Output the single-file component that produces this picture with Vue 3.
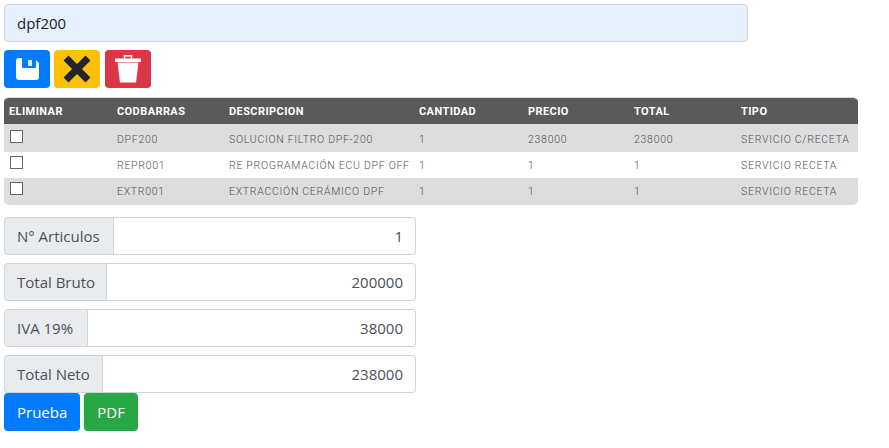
<script setup>
const rows = [
  ['DPF200', 'SOLUCION FILTRO DPF-200', '1', '238000', '238000', 'SERVICIO C/RECETA'],
  ['REPR001', 'RE PROGRAMACIÓN ECU DPF OFF', '1', '1', '1', 'SERVICIO RECETA'],
  ['EXTR001', 'EXTRACCIÓN CERÁMICO DPF', '1', '1', '1', 'SERVICIO RECETA'],
]
const heads = ['ELIMINAR', 'CODBARRAS', 'DESCRIPCION', 'CANTIDAD', 'PRECIO', 'TOTAL', 'TIPO']
const totals = [
  ['N° Articulos', '1'],
  ['Total Bruto', '200000'],
  ['IVA 19%', '38000'],
  ['Total Neto', '238000'],
]
</script>

<template>
  <main class="page">
    <input class="search" value="dpf200" />
    <div class="actions">
      <button class="btn icon blue" aria-label="Guardar">
        <svg width="23" height="22" viewBox="0 0 23 22">
          <path fill="#fff" d="M3 0h15l5 5v14a3 3 0 0 1-3 3H3a3 3 0 0 1-3-3V3a3 3 0 0 1 3-3z" />
          <path fill="#007bff" d="M6 0h14v8.500a1.500 1.500 0 0 1-1.500 1.500h-11A1.500 1.500 0 0 1 6 8.500z" />
          <rect x="12" y="2" width="4" height="6" fill="#d5e8ff" />
        </svg>
      </button>
      <button class="btn icon yellow" aria-label="Cancelar">
        <svg width="28" height="28" viewBox="0 0 28 28">
          <path d="M3 3l22 22M25 3L3 25" stroke="#212529" stroke-width="7" fill="none" />
        </svg>
      </button>
      <button class="btn icon red" aria-label="Eliminar">
        <svg width="26" height="28" viewBox="0 0 26 28">
          <path fill="#fff" d="M0 3.500h26V7H0zM2.500 7.500h21L21 27.500H5z" />
          <path fill="none" stroke="#fff" stroke-width="1.500" d="M9.500 4V.8h7V4" />
        </svg>
      </button>
    </div>

    <div class="table-wrap">
      <table>
        <colgroup>
          <col class="c1" /><col class="c2" /><col class="c3" /><col class="c4" />
          <col class="c5" /><col class="c6" /><col class="c7" />
        </colgroup>
        <thead>
          <tr><th v-for="h in heads" :key="h">{{ h }}</th></tr>
        </thead>
        <tbody>
          <tr v-for="r in rows" :key="r[0]">
            <td class="check"><span class="box"></span></td>
            <td v-for="(c, i) in r" :key="i">{{ c }}</td>
          </tr>
        </tbody>
      </table>
    </div>

    <div class="totals">
      <div v-for="t in totals" :key="t[0]" class="group">
        <span class="label">{{ t[0] }}</span>
        <input class="value" :value="t[1]" />
      </div>
    </div>
    <div class="foot">
      <button class="btn blue text">Prueba</button>
      <button class="btn green text">PDF</button>
    </div>
  </main>
</template>

<style scoped>
.page {
  box-sizing: border-box;
  width: 889px;
  height: 448px;
  padding: 4px;
  background: #fff;
  font-family: "Open Sans", "Noto Sans", sans-serif;
  font-size: 15px;
  color: #495057;
  overflow: hidden;
}
.search {
  display: block;
  box-sizing: border-box;
  width: 744px;
  height: 38px;
  padding: 0 12px;
  border: 1px solid #ced4da;
  border-radius: 4px;
  background: #e8f0fe;
  color: #1a1a2e;
  font: inherit;
}
.actions {
  display: flex;
  gap: 4px;
  margin-top: 8px;
}
.actions .btn:last-child { margin-left: 1px; }
.btn {
  display: flex;
  align-items: center;
  justify-content: center;
  box-sizing: border-box;
  height: 38px;
  padding: 0;
  border: 0;
  border-radius: 4px;
  color: #fff;
  font: inherit;
}
.icon { width: 46px; }
.blue { background: #007bff; }
.yellow { background: #ffc107; }
.red { background: #dc3545; }
.green { background: #28a745; }
.table-wrap {
  width: 854px;
  margin-top: 9px;
  border-top: 1px solid #d8d8d8;
  border-radius: 5px;
  overflow: hidden;
}
table {
  width: 854px;
  table-layout: fixed;
  border-collapse: collapse;
  font-family: Roboto, sans-serif;
  font-size: 10.500px;
  font-weight: 300;
  letter-spacing: 0.72px;
  line-height: 12px;
}
.c1 { width: 108px; }
.c2 { width: 112px; }
.c3 { width: 190px; }
.c4 { width: 109px; }
.c5 { width: 106px; }
.c6 { width: 107px; }
.c7 { width: 122px; }
th {
  box-sizing: border-box;
  height: 26px;
  padding: 2px 5px 0;
  background: #5a5a5a;
  color: #fff;
  font-size: 11px;
  font-weight: 700;
  letter-spacing: 0.42px;
  text-align: left;
}
td {
  box-sizing: border-box;
  height: 26px;
  padding: 2px 5px 0;
  color: #50505a;
  white-space: nowrap;
}
tbody tr:nth-child(odd) td { background: #dddddd; }
tbody tr:first-child td {
  height: 28px;
  padding-top: 4px;
}
tbody tr:last-child td {
  height: 27px;
  padding-top: 1px;
}
tbody tr td.check {
  padding: 0 6px;
  vertical-align: top;
}
.box {
  display: block;
  box-sizing: border-box;
  width: 13px;
  height: 13px;
  margin-top: 4px;
  border: 1px solid #666;
  background: #fff;
}
tbody tr:first-child .box { margin-top: 6px; }
.totals {
  display: flex;
  flex-direction: column;
  gap: 8px;
  width: 412px;
  margin-top: 12px;
}
.group {
  display: flex;
  height: 38px;
}
.label {
  display: flex;
  flex: none;
  box-sizing: border-box;
  align-items: center;
  padding: 0 12px;
  border: 1px solid #ced4da;
  border-radius: 4px 0 0 4px;
  background: #e9ecef;
  white-space: nowrap;
}
.group:nth-child(1) .label { width: 110px; }
.group:nth-child(2) .label { width: 103px; }
.group:nth-child(3) .label { width: 84px; }
.group:nth-child(4) .label { width: 99px; }
.value {
  flex: 1;
  min-width: 0;
  box-sizing: border-box;
  padding: 0 12px;
  border: 1px solid #ced4da;
  border-left: 0;
  border-radius: 0 4px 4px 0;
  background: #fff;
  color: #495057;
  font: inherit;
  text-align: right;
}
.foot {
  display: flex;
  gap: 4px;
}
.text { padding: 0 13px; }
</style>
